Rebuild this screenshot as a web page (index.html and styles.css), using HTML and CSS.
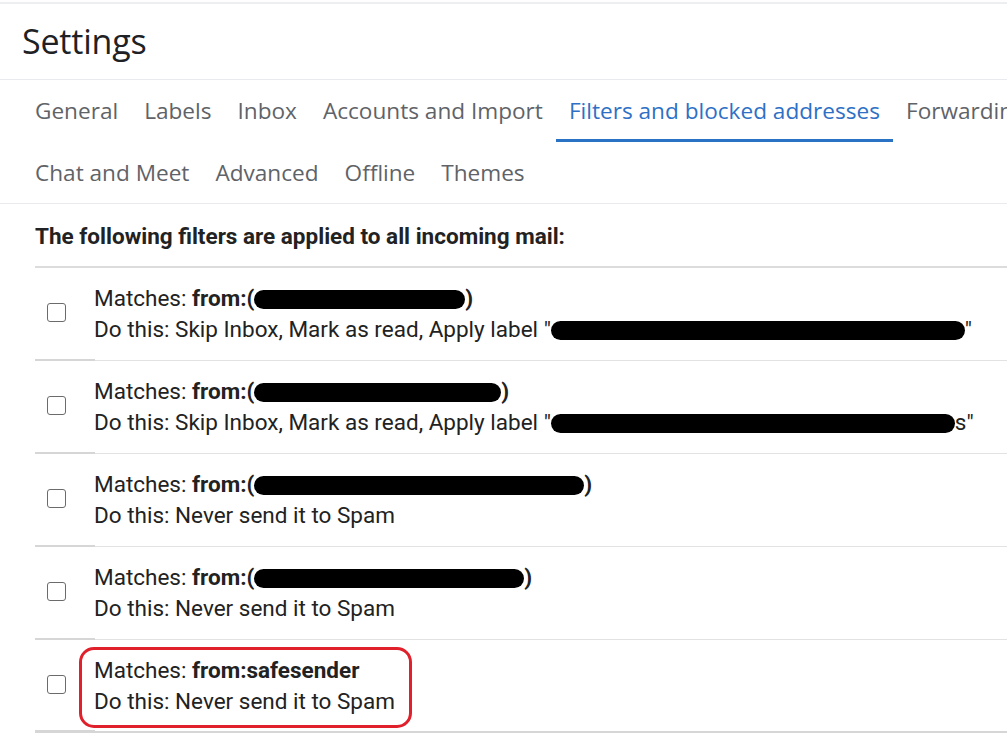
FILE: index.html
```html
<!DOCTYPE html>
<html>
<head>
<meta charset="utf-8">
<link rel="stylesheet" href="styles.css">
</head>
<body>
<div class="page">
  <header class="title-bar">
    <h1 class="title">Settings</h1>
  </header>
  <nav class="tabs">
    <div class="tab-row">
      <span class="tab">General</span>
      <span class="tab">Labels</span>
      <span class="tab">Inbox</span>
      <span class="tab">Accounts and Import</span>
      <span class="tab active">Filters and blocked addresses</span>
      <span class="tab">Forwarding and POP/IMAP</span>
    </div>
    <div class="tab-row">
      <span class="tab">Chat and Meet</span>
      <span class="tab">Advanced</span>
      <span class="tab">Offline</span>
      <span class="tab">Themes</span>
    </div>
  </nav>
  <section class="filters">
    <h2 class="filters-heading">The following filters are applied to all incoming mail:</h2>
    <div class="filter-list">
      <div class="filter">
        <span class="check"></span>
        <div class="filter-text">
          <div class="line">Matches: <b>from:(</b><span class="redact" style="width:211px"></span><b>)</b></div>
          <div class="line">Do this: Skip Inbox, Mark as read, Apply label "<span class="redact" style="width:414px"></span>"</div>
        </div>
      </div>
      <div class="filter">
        <span class="check"></span>
        <div class="filter-text">
          <div class="line">Matches: <b>from:(</b><span class="redact" style="width:247px"></span><b>)</b></div>
          <div class="line">Do this: Skip Inbox, Mark as read, Apply label "<span class="redact" style="width:404px"></span>s"</div>
        </div>
      </div>
      <div class="filter">
        <span class="check"></span>
        <div class="filter-text">
          <div class="line">Matches: <b>from:(</b><span class="redact" style="width:330px"></span><b>)</b></div>
          <div class="line">Do this: Never send it to Spam</div>
        </div>
      </div>
      <div class="filter">
        <span class="check"></span>
        <div class="filter-text">
          <div class="line">Matches: <b>from:(</b><span class="redact" style="width:270px"></span><b>)</b></div>
          <div class="line">Do this: Never send it to Spam</div>
        </div>
      </div>
      <div class="filter highlighted">
        <span class="check"></span>
        <div class="filter-text">
          <div class="line">Matches: <b>from:safesender</b></div>
          <div class="line">Do this: Never send it to Spam</div>
        </div>
        <span class="annotation"></span>
      </div>
    </div>
  </section>
</div>
</body>
</html>
```

FILE: styles.css
```css
html, body {
  margin: 0;
  padding: 0;
  background: #fff;
  overflow: hidden;
}

.page {
  width: 1007px;
  height: 743px;
  overflow: hidden;
  border-top: 2px solid #eceeef;
  margin-top: 2px;
  box-sizing: border-box;
}

.title-bar {
  height: 75px;
  border-bottom: 1px solid #e8eaed;
  display: flex;
  align-items: center;
  padding-left: 22px;
}

.title {
  margin: 0;
  font-family: "Open Sans", sans-serif;
  font-weight: 400;
  font-size: 34px;
  color: #202124;
  letter-spacing: -0.2px;
  padding-bottom: 2px;
}

.tabs {
  padding-left: 22px;
  border-bottom: 1px solid #e8eaed;
}

.tab-row {
  display: flex;
  height: 62px;
  white-space: nowrap;
}

.tab-row + .tab-row {
  height: 61px;
}

.tab {
  display: flex;
  align-items: center;
  padding: 2px 13px 0;
  font-family: "Open Sans", sans-serif;
  font-size: 22.6px;
  color: #5f6368;
  border-bottom: 3px solid transparent;
  box-sizing: border-box;
}

.tab.active {
  color: #2e70c6;
  border-bottom-color: #2a72c4;
}

.filters {
  padding-left: 35px;
  font-family: Roboto, "Liberation Sans", sans-serif;
  color: #222;
}

.filters-heading {
  margin: 0;
  height: 64px;
  display: flex;
  align-items: center;
  font-size: 22.5px;
  font-weight: 700;
  border-bottom: 2px solid #dcdcdc;
  box-sizing: border-box;
  padding-top: 2px;
}

.filter {
  position: relative;
  display: flex;
  align-items: center;
  height: 93px;
  border-bottom: 1px solid #e2e2e2;
  box-sizing: border-box;
}

.filter::after {
  content: "";
  position: absolute;
  left: 0;
  bottom: -1px;
  width: 60px;
  height: 2px;
  background: #d6d6d6;
}

.filter:last-child {
  border-bottom: 2px solid #d6d6d6;
}

.check {
  flex: none;
  width: 17px;
  height: 17px;
  border: 1.5px solid #6b6b6b;
  border-radius: 3px;
  margin-left: 12px;
  margin-right: 28px;
  margin-bottom: 3px;
}

.filter-text {
  font-size: 22.5px;
  line-height: 31px;
  white-space: nowrap;
}

.line b {
  font-weight: 700;
}

.redact {
  display: inline-block;
  height: 19px;
  background: #000;
  border-radius: 10px;
  vertical-align: -3px;
}

.annotation {
  position: absolute;
  left: 44px;
  top: 7px;
  width: 333px;
  height: 81px;
  border: 3px solid #e0202b;
  border-radius: 15px;
  box-sizing: border-box;
}
```
